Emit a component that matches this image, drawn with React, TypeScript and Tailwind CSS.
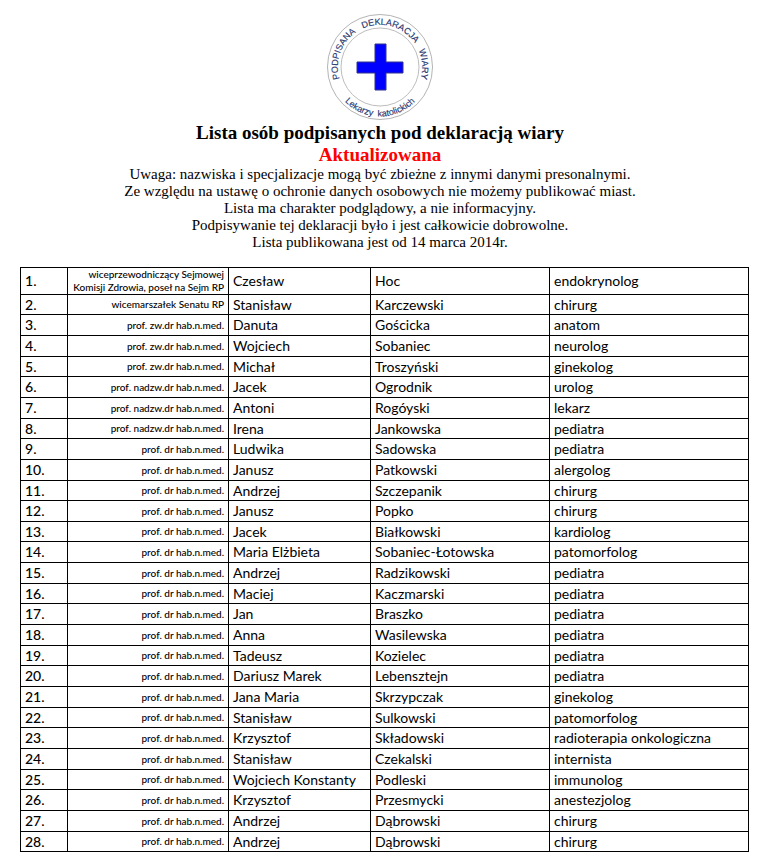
type Person = [title: string, first: string, last: string, field: string];

const ZW = "prof. zw.dr hab.n.med.";
const NADZW = "prof. nadzw.dr hab.n.med.";
const PROF = "prof. dr hab.n.med.";

const people: Person[] = [
  ["wiceprzewodniczący Sejmowej Komisji Zdrowia, poseł na Sejm RP", "Czesław", "Hoc", "endokrynolog"],
  ["wicemarszałek Senatu RP", "Stanisław", "Karczewski", "chirurg"],
  [ZW, "Danuta", "Gościcka", "anatom"],
  [ZW, "Wojciech", "Sobaniec", "neurolog"],
  [ZW, "Michał", "Troszyński", "ginekolog"],
  [NADZW, "Jacek", "Ogrodnik", "urolog"],
  [NADZW, "Antoni", "Rogóyski", "lekarz"],
  [NADZW, "Irena", "Jankowska", "pediatra"],
  [PROF, "Ludwika", "Sadowska", "pediatra"],
  [PROF, "Janusz", "Patkowski", "alergolog"],
  [PROF, "Andrzej", "Szczepanik", "chirurg"],
  [PROF, "Janusz", "Popko", "chirurg"],
  [PROF, "Jacek", "Białkowski", "kardiolog"],
  [PROF, "Maria Elżbieta", "Sobaniec-Łotowska", "patomorfolog"],
  [PROF, "Andrzej", "Radzikowski", "pediatra"],
  [PROF, "Maciej", "Kaczmarski", "pediatra"],
  [PROF, "Jan", "Braszko", "pediatra"],
  [PROF, "Anna", "Wasilewska", "pediatra"],
  [PROF, "Tadeusz", "Kozielec", "pediatra"],
  [PROF, "Dariusz Marek", "Lebensztejn", "pediatra"],
  [PROF, "Jana Maria", "Skrzypczak", "ginekolog"],
  [PROF, "Stanisław", "Sulkowski", "patomorfolog"],
  [PROF, "Krzysztof", "Składowski", "radioterapia onkologiczna"],
  [PROF, "Stanisław", "Czekalski", "internista"],
  [PROF, "Wojciech Konstanty", "Podleski", "immunolog"],
  [PROF, "Krzysztof", "Przesmycki", "anestezjolog"],
  [PROF, "Andrzej", "Dąbrowski", "chirurg"],
  [PROF, "Andrzej", "Dąbrowski", "chirurg"],
];

// Rows alternate between 20 and 21 pixels, roughly two tall ones for each short one.
function rowHeight(n: number) {
  if (n === 1) return "h-[27px]";
  const short = n <= 11 ? n % 3 === 2 : n % 3 === 1;
  return short ? "h-5" : "h-[21px]";
}

function Seal() {
  return (
    <svg width="110" height="110" viewBox="-55 -55 110 110" role="img" aria-label="Podpisana deklaracja wiary">
      <defs>
        <path id="seal-top" d="M -38.4 17.5 A 42.2 42.2 0 1 1 38.4 17.5" />
        <path id="seal-bottom" d="M -44 22 A 49 49 0 0 0 44 22" />
      </defs>
      <circle r="52.5" fill="none" stroke="#b4b4b4" strokeWidth="1" />
      <circle r="39" fill="none" stroke="#bdbdbd" strokeWidth="1" />
      <path d="M-5 -23H6V-5H23V6H6V23H-5V6H-23V-5H-5Z" fill="#0000fe" stroke="#33338c" strokeWidth="1" />
      <g fill="#27366f" stroke="#27366f" strokeWidth="0.15" fontFamily="'Liberation Sans', Arial, sans-serif" fontSize="9" textAnchor="middle">
        <text>
          <textPath href="#seal-top" startOffset="50%">
            {"PODPISANA\u00a0\u00a0\u00a0DEKLARACJA\u00a0\u00a0\u00a0WIARY"}
          </textPath>
        </text>
        <text>
          <textPath href="#seal-bottom" startOffset="50%">
            {"Lekarzy\u00a0\u00a0katolickich"}
          </textPath>
        </text>
      </g>
    </svg>
  );
}

export default function App() {
  return (
    <main className="bg-white pt-3 pr-[11px] pl-5 text-black">
      <header className="flex flex-col items-center pr-[9px] pb-4 text-center font-['Liberation_Serif','Times_New_Roman',serif]">
        <Seal />
        <div className="text-[19px] leading-[22px] font-bold">
          <h1>Lista osób podpisanych pod deklaracją wiary</h1>
          <p className="text-[#ff0000]">Aktualizowana</p>
        </div>
        <div className="text-[15px] leading-[17px]">
          <p>Uwaga: nazwiska i specjalizacje mogą być zbieżne z innymi danymi presonalnymi.</p>
          <p>Ze względu na ustawę o ochronie danych osobowych nie możemy publikować miast.</p>
          <p>Lista ma charakter podglądowy, a nie informacyjny.</p>
          <p>Podpisywanie tej deklaracji było i jest całkowicie dobrowolne.</p>
          <p>Lista publikowana jest od 14 marca 2014r.</p>
        </div>
      </header>
      <table className="w-full table-fixed border-collapse font-['Lato','Carlito',sans-serif] text-[14px] leading-4 font-normal [&_td]:border [&_td]:border-black [&_td]:px-1 [&_td]:py-0 [&_th]:border [&_th]:border-black [&_th]:px-1 [&_th]:py-0">
        <colgroup>
          <col className="w-[47px]" />
          <col className="w-[161px]" />
          <col className="w-[142px]" />
          <col className="w-[179px]" />
          <col />
        </colgroup>
        <tbody>
          {people.map(([title, first, last, field], i) => (
            <tr key={i} className={rowHeight(i + 1)}>
              <th scope="row" className="text-left font-medium">{i + 1}.</th>
              <td className="text-right text-[10px] leading-[13px] font-medium">{title}</td>
              <td>{first}</td>
              <td>{last}</td>
              <td>{field}</td>
            </tr>
          ))}
        </tbody>
      </table>
    </main>
  );
}
